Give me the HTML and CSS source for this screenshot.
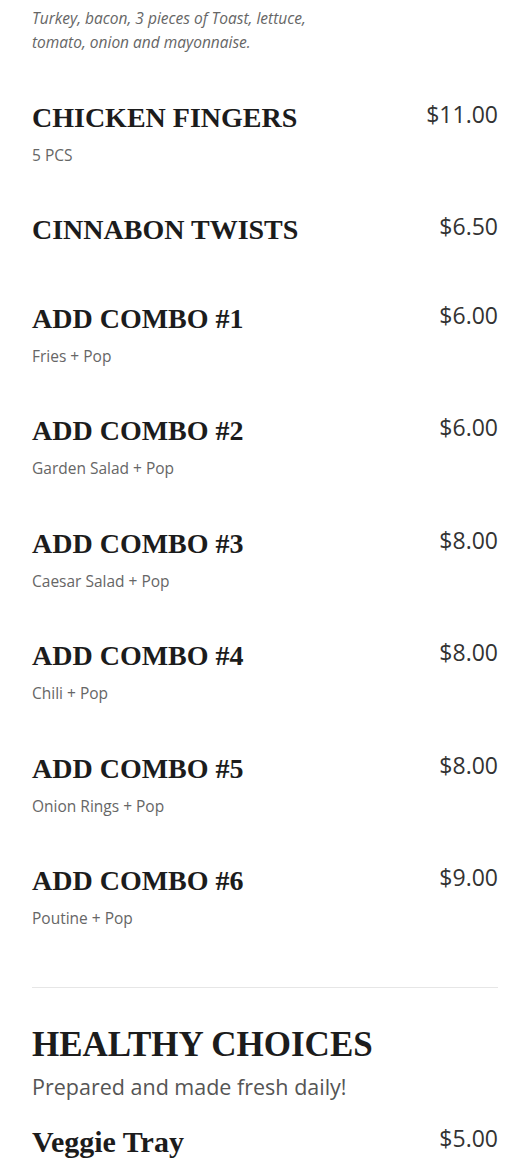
FILE: index.html
```html
<!DOCTYPE html>
<html lang="en">
  <head>
    <meta charset="UTF-8" />
    <meta name="viewport" content="width=device-width, initial-scale=1.0" />
    <title>Menu</title>
    <link rel="stylesheet" href="styles.css">
  </head>
  <body>
    <div class="menu">
      <div class="section">
        <div class="item cut">
          <div class="item-info">
            <p class="desc italic">Turkey, bacon, 3 pieces of Toast, lettuce, tomato, onion and mayonnaise.</p>
          </div>
        </div>
        <div class="item">
          <div class="item-info">
            <h3>CHICKEN FINGERS</h3>
            <p class="desc">5 PCS</p>
          </div>
          <div class="price">$11.00</div>
        </div>
        <div class="item">
          <div class="item-info">
            <h3>CINNABON TWISTS</h3>
          </div>
          <div class="price">$6.50</div>
        </div>
        <div class="item">
          <div class="item-info">
            <h3>ADD COMBO #1</h3>
            <p class="desc">Fries + Pop</p>
          </div>
          <div class="price">$6.00</div>
        </div>
        <div class="item">
          <div class="item-info">
            <h3>ADD COMBO #2</h3>
            <p class="desc">Garden Salad + Pop</p>
          </div>
          <div class="price">$6.00</div>
        </div>
        <div class="item">
          <div class="item-info">
            <h3>ADD COMBO #3</h3>
            <p class="desc">Caesar Salad + Pop</p>
          </div>
          <div class="price">$8.00</div>
        </div>
        <div class="item">
          <div class="item-info">
            <h3>ADD COMBO #4</h3>
            <p class="desc">Chili + Pop</p>
          </div>
          <div class="price">$8.00</div>
        </div>
        <div class="item">
          <div class="item-info">
            <h3>ADD COMBO #5</h3>
            <p class="desc">Onion Rings + Pop</p>
          </div>
          <div class="price">$8.00</div>
        </div>
        <div class="item">
          <div class="item-info">
            <h3>ADD COMBO #6</h3>
            <p class="desc">Poutine + Pop</p>
          </div>
          <div class="price">$9.00</div>
        </div>
      </div>

      <hr class="divider" />

      <div class="section">
        <h2>HEALTHY CHOICES</h2>
        <p class="section-note">Prepared and made fresh daily!</p>
        <div class="item">
          <div class="item-info">
            <h3 class="plain">Veggie Tray</h3>
          </div>
          <div class="price">$5.00</div>
        </div>
      </div>
    </div>
  </body>
</html>
```

FILE: styles.css
```css
body {
  font-family: "Open Sans", Lato, Arial, sans-serif;
  margin: 0;
  background-color: #fff;
  color: #222;
}
.menu {
  padding: 6px 32px 0 32px;
}
.item {
  display: flex;
  justify-content: space-between;
  align-items: flex-start;
  padding-bottom: 38.5px;
}
.item-info {
  flex: 0 0 70%;
}
.item h3 {
  margin: 0;
  font-family: "Liberation Serif", "Times New Roman", serif;
  font-weight: bold;
  font-size: 28px;
  line-height: 50px;
  color: #1c1c1c;
}
.item h3.plain {
  font-size: 30px;
}
.desc {
  margin: 0;
  font-size: 15.5px;
  line-height: 24px;
  color: #666;
}
.desc.italic {
  font-style: italic;
}
.price {
  font-size: 23px;
  line-height: 42px;
  color: #333;
  white-space: nowrap;
}
.divider {
  margin: 18px 0 36px 0;
  border: none;
  border-top: 1px solid #e6e6e6;
}
h2 {
  margin: 0;
  font-family: "Liberation Serif", "Times New Roman", serif;
  font-weight: bold;
  font-size: 35px;
  line-height: 1.2;
  color: #1c1c1c;
}
.section-note {
  margin: 6px 0 15px 0;
  font-size: 21.5px;
  line-height: 30px;
  color: #555;
}
```
